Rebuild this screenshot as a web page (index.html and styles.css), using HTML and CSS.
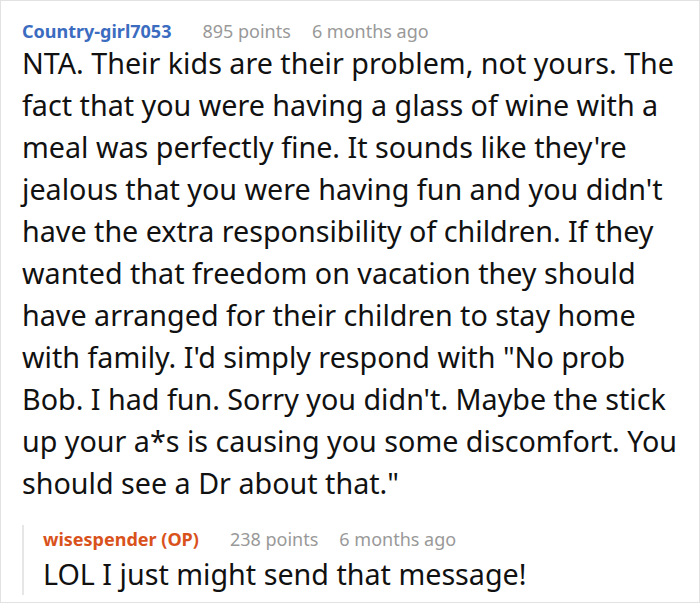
FILE: index.html
```html
<!DOCTYPE html>
<html>
<head>
<meta charset="utf-8">
<link rel="stylesheet" href="styles.css">
</head>
<body>
<div class="card">
  <div class="comment">
    <div class="meta">
      <span class="author">Country-girl7053</span>
      <span class="points">895 points</span>
      <span class="time">6 months ago</span>
    </div>
    <p class="text body">NTA. Their kids are their problem, not yours. The fact that you were having a glass of wine with a meal was perfectly fine. It sounds like they're jealous that you were having fun and you didn't have the extra responsibility of children. If they wanted that freedom on vacation they should have arranged for their children to stay home with family. I'd simply respond with "No prob Bob. I had fun. Sorry you didn't. Maybe the stick up your a*s is causing you some discomfort. You should see a Dr about that."</p>
    <div class="reply">
      <div class="meta">
        <span class="author op">wisespender (OP)</span>
        <span class="points">238 points</span>
        <span class="time">6 months ago</span>
      </div>
      <p class="text">LOL I just might send that message!</p>
    </div>
  </div>
</div>
</body>
</html>
```

FILE: styles.css
```css
html, body {
  margin: 0;
  padding: 0;
  background: #fff;
}
.card {
  width: 700px;
  height: 603px;
  box-sizing: border-box;
  border: 1px solid #e2e2e2;
  font-family: "Noto Sans", "Open Sans", sans-serif;
  overflow: hidden;
}
.comment {
  padding: 16px 16px 0 21px;
}
.meta {
  display: flex;
  align-items: baseline;
  font-size: 18px;
  line-height: 28px;
  white-space: nowrap;
}
.author {
  font-weight: 700;
  color: #3b6cbf;
  margin-right: 31px;
}
.author.op {
  color: #d9521c;
}
.points, .time {
  color: #999;
}
.points {
  margin-right: 21px;
}
.text {
  margin: 0;
  font-size: 28.7px;
  line-height: 42px;
  color: #111;
}
.text.body {
  margin-top: -3px;
}
.reply {
  margin-top: 32px;
  border-left: 2px solid #e6e6e6;
  padding-left: 19px;
}
.reply .meta {
  margin-top: -11px;
}
.reply .text {
  margin-bottom: -7px;
}
```
